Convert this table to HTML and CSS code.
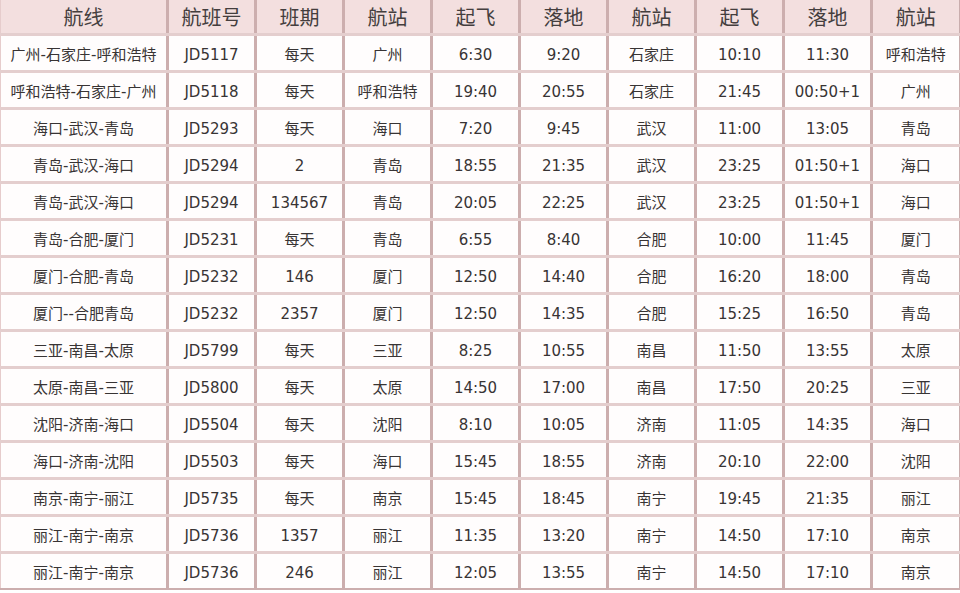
FILE: index.html
```html
<!DOCTYPE html>
<html lang="zh">
<head>
<meta charset="utf-8">
<link rel="stylesheet" href="styles.css">
</head>
<body>
<table class="schedule">
<colgroup>
<col class="c-route"><col class="c-n"><col class="c-n"><col class="c-n"><col class="c-n"><col class="c-n"><col class="c-n"><col class="c-n"><col class="c-n"><col class="c-n">
</colgroup>
<thead>
<tr><th>航线</th><th>航班号</th><th>班期</th><th>航站</th><th>起飞</th><th>落地</th><th>航站</th><th>起飞</th><th>落地</th><th>航站</th></tr>
</thead>
<tbody>
<tr><td>广州-石家庄-呼和浩特</td><td>JD5117</td><td>每天</td><td>广州</td><td>6:30</td><td>9:20</td><td>石家庄</td><td>10:10</td><td>11:30</td><td>呼和浩特</td></tr>
<tr><td>呼和浩特-石家庄-广州</td><td>JD5118</td><td>每天</td><td>呼和浩特</td><td>19:40</td><td>20:55</td><td>石家庄</td><td>21:45</td><td>00:50+1</td><td>广州</td></tr>
<tr><td>海口-武汉-青岛</td><td>JD5293</td><td>每天</td><td>海口</td><td>7:20</td><td>9:45</td><td>武汉</td><td>11:00</td><td>13:05</td><td>青岛</td></tr>
<tr><td>青岛-武汉-海口</td><td>JD5294</td><td>2</td><td>青岛</td><td>18:55</td><td>21:35</td><td>武汉</td><td>23:25</td><td>01:50+1</td><td>海口</td></tr>
<tr><td>青岛-武汉-海口</td><td>JD5294</td><td>134567</td><td>青岛</td><td>20:05</td><td>22:25</td><td>武汉</td><td>23:25</td><td>01:50+1</td><td>海口</td></tr>
<tr><td>青岛-合肥-厦门</td><td>JD5231</td><td>每天</td><td>青岛</td><td>6:55</td><td>8:40</td><td>合肥</td><td>10:00</td><td>11:45</td><td>厦门</td></tr>
<tr><td>厦门-合肥-青岛</td><td>JD5232</td><td>146</td><td>厦门</td><td>12:50</td><td>14:40</td><td>合肥</td><td>16:20</td><td>18:00</td><td>青岛</td></tr>
<tr><td>厦门--合肥青岛</td><td>JD5232</td><td>2357</td><td>厦门</td><td>12:50</td><td>14:35</td><td>合肥</td><td>15:25</td><td>16:50</td><td>青岛</td></tr>
<tr><td>三亚-南昌-太原</td><td>JD5799</td><td>每天</td><td>三亚</td><td>8:25</td><td>10:55</td><td>南昌</td><td>11:50</td><td>13:55</td><td>太原</td></tr>
<tr><td>太原-南昌-三亚</td><td>JD5800</td><td>每天</td><td>太原</td><td>14:50</td><td>17:00</td><td>南昌</td><td>17:50</td><td>20:25</td><td>三亚</td></tr>
<tr><td>沈阳-济南-海口</td><td>JD5504</td><td>每天</td><td>沈阳</td><td>8:10</td><td>10:05</td><td>济南</td><td>11:05</td><td>14:35</td><td>海口</td></tr>
<tr><td>海口-济南-沈阳</td><td>JD5503</td><td>每天</td><td>海口</td><td>15:45</td><td>18:55</td><td>济南</td><td>20:10</td><td>22:00</td><td>沈阳</td></tr>
<tr><td>南京-南宁-丽江</td><td>JD5735</td><td>每天</td><td>南京</td><td>15:45</td><td>18:45</td><td>南宁</td><td>19:45</td><td>21:35</td><td>丽江</td></tr>
<tr><td>丽江-南宁-南京</td><td>JD5736</td><td>1357</td><td>丽江</td><td>11:35</td><td>13:20</td><td>南宁</td><td>14:50</td><td>17:10</td><td>南京</td></tr>
<tr><td>丽江-南宁-南京</td><td>JD5736</td><td>246</td><td>丽江</td><td>12:05</td><td>13:55</td><td>南宁</td><td>14:50</td><td>17:10</td><td>南京</td></tr>
</tbody>
</table>
</body>
</html>
```
FILE: styles.css
```css
html, body {
  margin: 0;
  padding: 0;
  background: #ffffff;
}
.schedule {
  width: 960px;
  table-layout: fixed;
  border-collapse: collapse;
  font-family: "DejaVu Sans", "Noto Sans CJK SC", sans-serif;
  color: #383434;
}
.c-route { width: 167px; }
.c-n { width: 88px; }
.schedule th,
.schedule td {
  text-align: center;
  vertical-align: middle;
  padding: 0;
  line-height: 20px;
  border-top: 3px solid #e4cece;
  border-bottom: 3px solid #e4cece;
  border-left: 3px solid #ccaeae;
  border-right: 3px solid #ccaeae;
  white-space: nowrap;
  overflow: hidden;
}
.schedule th {
  background: #f3dfdf;
  font-family: "Noto Sans CJK SC", sans-serif;
  font-weight: normal;
  font-size: 20px;
  line-height: 24px;
  height: 33px;
  border-top: none;
  color: #443e3e;
}
.schedule td {
  font-size: 15px;
  height: 31px;
  padding-top: 3px;
  background: #fffdfd;
}
.schedule tr > :first-child {
  border-left: 1px solid #e6cccc;
}
.schedule tr > :last-child {
  border-right: 2px solid #c9adad;
}
.schedule tbody tr:last-child td {
  border-bottom: 2px solid #ccaeae;
}
```
